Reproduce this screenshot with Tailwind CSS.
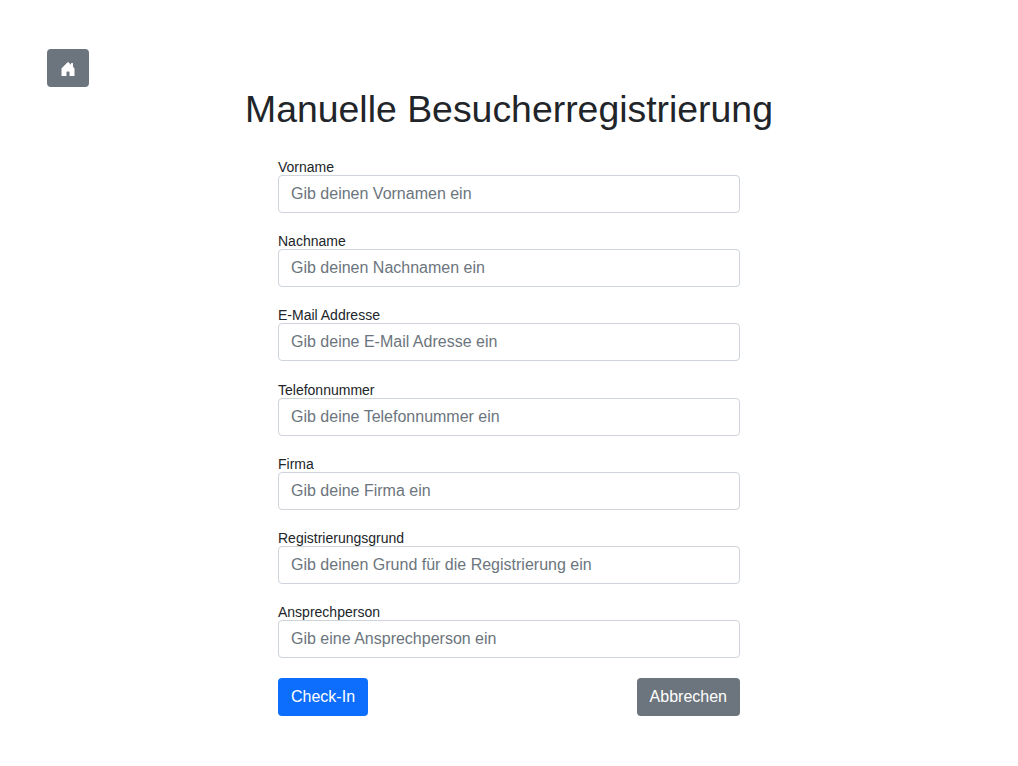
<!DOCTYPE html>
<html lang="de">
<head>
    <meta charset="UTF-8">
    <title>Manuelle Besucherregistrierung</title>
    <script src="https://cdn.jsdelivr.net/npm/@tailwindcss/browser@4"></script>
</head>
<body class="min-h-screen bg-white text-[#212529] font-['Liberation_Sans',Arial,sans-serif]">
    <div class="px-[47px] pt-[49px]">
        <a href="#" class="flex items-center justify-center w-[42px] h-[38px] rounded-[4px] bg-[#6c757d]">
            <svg class="w-4 h-4 mt-[2px]" viewBox="0 0 16 16" fill="#fff"><path d="M6.500 14.500v-3.505c0-.245.25-.495.5-.495h2c.25 0 .5.25.5.5v3.500a.5.5 0 0 0 .5.5h4a.5.5 0 0 0 .5-.5v-7a.5.5 0 0 0-.146-.354L13 5.793V2.500a.5.5 0 0 0-.5-.5h-1a.5.5 0 0 0-.5.5v1.293L8.354 1.146a.5.5 0 0 0-.708 0l-6 6A.5.5 0 0 0 1.500 7.500v7a.5.5 0 0 0 .5.5h4a.5.5 0 0 0 .5-.5Z"/></svg>
        </a>
    </div>
    <h1 class="text-center text-[37.4px] leading-[45px]">Manuelle Besucherregistrierung</h1>
    <form class="w-[462px] ml-[278px] mt-[22px]">
        <div class="mb-[15.2px]">
            <label class="block h-[21px] pt-[3px] text-[14px] leading-[21px]">Vorname</label>
            <input class="block w-full h-[38px] px-[12px] border border-[#ced4da] rounded-[4px] text-[16px] placeholder:text-[#6c757d]" placeholder="Gib deinen Vornamen ein">
        </div>
        <div class="mb-[15.2px]">
            <label class="block h-[21px] pt-[3px] text-[14px] leading-[21px]">Nachname</label>
            <input class="block w-full h-[38px] px-[12px] border border-[#ced4da] rounded-[4px] text-[16px] placeholder:text-[#6c757d]" placeholder="Gib deinen Nachnamen ein">
        </div>
        <div class="mb-[15.2px]">
            <label class="block h-[21px] pt-[3px] text-[14px] leading-[21px]">E-Mail Addresse</label>
            <input class="block w-full h-[38px] px-[12px] border border-[#ced4da] rounded-[4px] text-[16px] placeholder:text-[#6c757d]" placeholder="Gib deine E-Mail Adresse ein">
        </div>
        <div class="mb-[15.2px]">
            <label class="block h-[21px] pt-[3px] text-[14px] leading-[21px]">Telefonnummer</label>
            <input class="block w-full h-[38px] px-[12px] border border-[#ced4da] rounded-[4px] text-[16px] placeholder:text-[#6c757d]" placeholder="Gib deine Telefonnummer ein">
        </div>
        <div class="mb-[15.2px]">
            <label class="block h-[21px] pt-[3px] text-[14px] leading-[21px]">Firma</label>
            <input class="block w-full h-[38px] px-[12px] border border-[#ced4da] rounded-[4px] text-[16px] placeholder:text-[#6c757d]" placeholder="Gib deine Firma ein">
        </div>
        <div class="mb-[15.2px]">
            <label class="block h-[21px] pt-[3px] text-[14px] leading-[21px]">Registrierungsgrund</label>
            <input class="block w-full h-[38px] px-[12px] border border-[#ced4da] rounded-[4px] text-[16px] placeholder:text-[#6c757d]" placeholder="Gib deinen Grund für die Registrierung ein">
        </div>
        <div class="mb-[20px]">
            <label class="block h-[21px] pt-[3px] text-[14px] leading-[21px]">Ansprechperson</label>
            <input class="block w-full h-[38px] px-[12px] border border-[#ced4da] rounded-[4px] text-[16px] placeholder:text-[#6c757d]" placeholder="Gib eine Ansprechperson ein">
        </div>
        <div class="flex justify-between">
            <button type="button" class="h-[38px] px-[13px] rounded-[4px] bg-[#0d6efd] text-white text-[16px]">Check-In</button>
            <button type="button" class="h-[38px] px-[13px] rounded-[4px] bg-[#6c757d] text-white text-[16px]">Abbrechen</button>
        </div>
    </form>
</body>
</html>
